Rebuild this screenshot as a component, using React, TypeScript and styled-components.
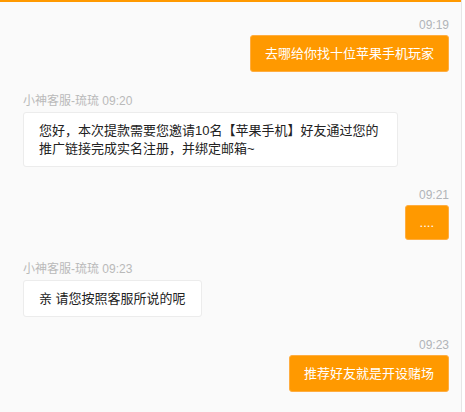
import React from "react";
import styled, { createGlobalStyle } from "styled-components";

type Msg = {
  id: number;
  mine: boolean;
  meta: string;
  text: string;
  compact?: boolean;
};

const messages: Msg[] = [
  { id: 1, mine: true, meta: "09:19", text: "去哪给你找十位苹果手机玩家" },
  {
    id: 2,
    mine: false,
    meta: "小神客服-琉琉 09:20",
    text: "您好，本次提款需要您邀请10名【苹果手机】好友通过您的推广链接完成实名注册，并绑定邮箱~",
  },
  { id: 3, mine: true, meta: "09:21", text: "....", compact: true },
  { id: 4, mine: false, meta: "小神客服-琉琉 09:23", text: "亲 请您按照客服所说的呢" },
  { id: 5, mine: true, meta: "09:23", text: "推荐好友就是开设赌场" },
];

const App = () => {
  return (
    <>
      <GlobalStyle />
      <Wrapper>
        <TopBar />
        <ChatList>
          {messages.map((m) => (
            <Message key={m.id} $mine={m.mine}>
              <Meta $mine={m.mine}>{m.meta}</Meta>
              <Bubble $mine={m.mine} $compact={!!m.compact}>
                {m.text}
              </Bubble>
            </Message>
          ))}
        </ChatList>
      </Wrapper>
    </>
  );
};
export default App;

const GlobalStyle = createGlobalStyle`
  html, body {
    margin: 0;
    padding: 0;
    background: #ffffff;
  }
  * {
    box-sizing: border-box;
  }
`;

const Wrapper = styled.div`
  width: 462px;
  height: 412px;
  background-color: #fafafa;
  border-right: 1px solid #e6e6e6;
  font-family: "Liberation Sans", "Noto Sans CJK SC", sans-serif;
  overflow: hidden;
`;

const TopBar = styled.div`
  height: 2px;
  background-color: #ff9900;
`;

const ChatList = styled.div`
  display: flex;
  flex-direction: column;
  gap: 21px;
  padding: 16px 12px 0 23px;
`;

const Message = styled.div<{ $mine: boolean }>`
  display: flex;
  flex-direction: column;
  align-items: ${(p) => (p.$mine ? "flex-end" : "flex-start")};
  gap: 3px;
`;

const Meta = styled.div<{ $mine: boolean }>`
  font-size: 12px;
  line-height: ${(p) => (p.$mine ? "14px" : "16px")};
  color: ${(p) => (p.$mine ? "#b1b4b8" : "#b9b9b9")};
`;

const Bubble = styled.div<{ $mine: boolean; $compact: boolean }>`
  max-width: 375px;
  padding: 9px ${(p) => (p.$mine ? "14px" : "15px")} 8px;
  font-size: 13px;
  line-height: ${(p) => (p.$compact ? "16px" : "18px")};
  border-radius: 3px;
  border: 1px solid ${(p) => (p.$mine ? "#ffad40" : "#ececec")};
  background-color: ${(p) => (p.$mine ? "#ff9900" : "#ffffff")};
  color: ${(p) => (p.$mine ? "#ffffff" : "#222222")};
`;
